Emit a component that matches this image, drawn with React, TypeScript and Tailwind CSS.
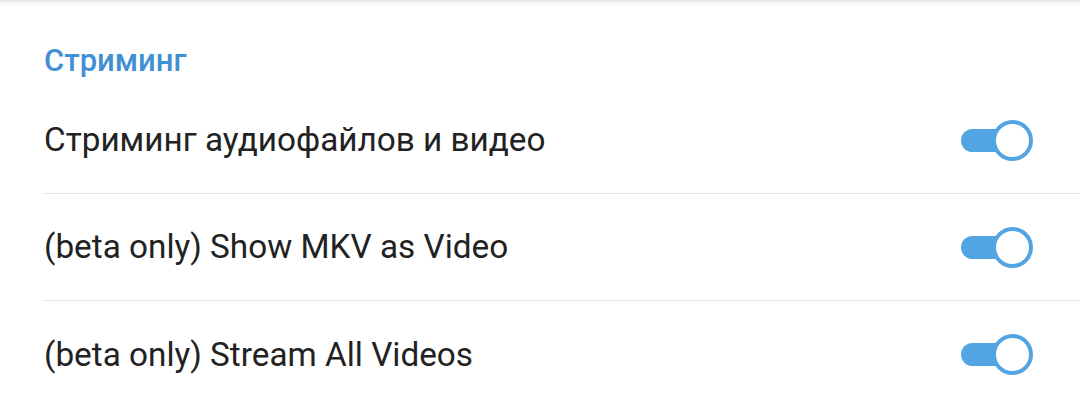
import React from 'react';

const rows = [
    'Стриминг аудиофайлов и видео',
    '(beta only) Show MKV as Video',
    '(beta only) Stream All Videos'
];

const Toggle: React.FC = () => (
    <div className="relative w-[72px] h-[42px] flex items-center">
        <div className="absolute left-0 w-[56px] h-[23px] rounded-full bg-[#52a4e3]" />
        <div className="absolute right-0 w-[41px] h-[41px] rounded-full bg-white border-[4px] border-[#52a4e3]" />
    </div>
);

export default function App() {
    return (
        <div className="w-[1080px] h-[406px] bg-white overflow-hidden" style={{ fontFamily: 'Roboto, "Noto Sans", sans-serif' }}>
            {/* top edge with faint shadow */}
            <div className="h-[2px] bg-[#e9e9e9]" />
            <div className="h-[6px] bg-gradient-to-b from-[#f6f6f6] to-white -mb-[6px]" />

            <div className="h-[85px] flex items-end pb-[7px] pl-[44px]">
                <span className="text-[31px] leading-[38px] font-medium text-[#4190d3]">Стриминг</span>
            </div>

            <div className="pl-[43px]">
                {rows.map((label, i) => (
                    <div
                        key={label}
                        className={`h-[107px] flex items-center justify-between pr-[47px] ${i < rows.length - 1 ? 'border-b-[1.5px] border-[#e2e2e2]' : ''}`}
                    >
                        <span className="pl-[1px] text-[33.3px] leading-[40px] text-[#222222]">{label}</span>
                        <Toggle />
                    </div>
                ))}
            </div>
        </div>
    );
}
